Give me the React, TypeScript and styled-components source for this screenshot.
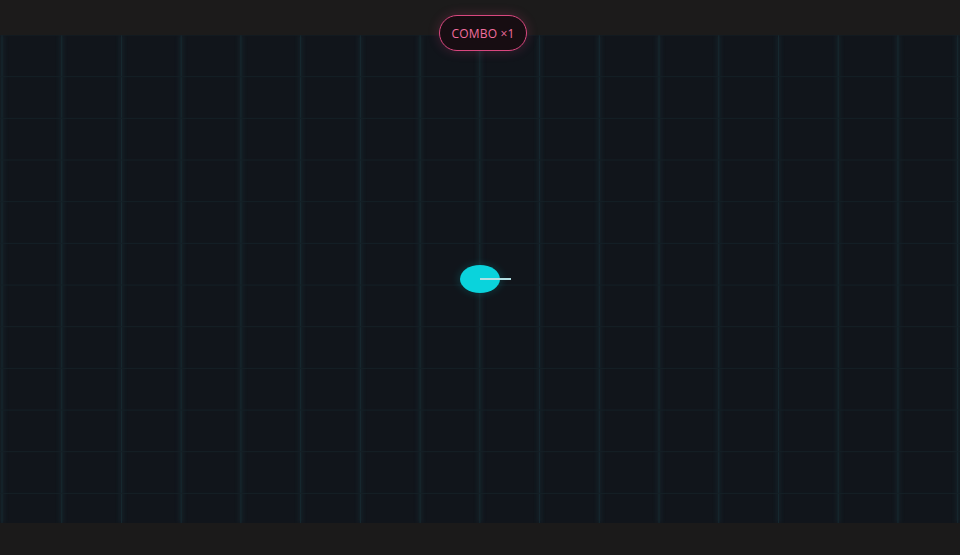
import React from "react";
import styled, { createGlobalStyle } from "styled-components";

const GlobalStyle = createGlobalStyle`
    html, body {
        margin: 0;
        padding: 0;
        background: #1b1b1b;
        font-family: "Open Sans", "Liberation Sans", sans-serif;
    }
`;

const FIELD_W = 960;
const FIELD_H = 488;
const COL = 59.73;
const ROW = 41.67;

const cols = Array.from({ length: 17 }, (_, i) => 2 + i * COL).filter((x) => x < FIELD_W);
const rows = Array.from({ length: 12 }, (_, i) => i * ROW).filter((y) => y < FIELD_H);

const Grid = () => (
    <svg width={FIELD_W} height={FIELD_H} viewBox={`0 0 ${FIELD_W} ${FIELD_H}`}>
        <defs>
            <filter id="glow" x="-10%" y="-10%" width="120%" height="120%">
                <feGaussianBlur stdDeviation="2" />
            </filter>
            <filter id="soft" x="-50%" y="-50%" width="200%" height="200%">
                <feGaussianBlur stdDeviation="3" />
            </filter>
        </defs>
        <g stroke="#1a3a44" strokeWidth="4" filter="url(#glow)" opacity="0.35">
            {cols.map((x) => (
                <line key={`gv${x}`} x1={x} y1={0} x2={x} y2={FIELD_H} />
            ))}
        </g>
        <g stroke="#172930" strokeWidth="1">
            {cols.map((x) => (
                <line key={`v${x}`} x1={x} y1={0} x2={x} y2={FIELD_H} />
            ))}
        </g>
        <g stroke="#152127" strokeWidth="1">
            {rows.map((y) => (
                <line key={`h${y}`} x1={0} y1={y} x2={FIELD_W} y2={y} />
            ))}
        </g>
        <ellipse cx={480} cy={244} rx={23} ry={16} fill="#00d2da" opacity="0.12" filter="url(#soft)" />
        <ellipse cx={480} cy={244} rx={20} ry={14} fill="#0ad3dc" />
        <line x1={480} y1={244} x2={511} y2={244} stroke="#b0dfe3" strokeWidth="2" />
    </svg>
);

export default function App() {
    return (
        <>
            <GlobalStyle />
            <Screen>
                <TopBar />
                <Field>
                    <Grid />
                </Field>
                <BottomBar />
                <Combo>COMBO ×1</Combo>
            </Screen>
        </>
    );
}

const Screen = styled.div`
    position: relative;
    display: flex;
    flex-direction: column;
    width: 960px;
    height: 555px;
    overflow: hidden;
    background: #1b1b1b;
`;

const TopBar = styled.div`
    height: 35px;
    flex: none;
    background: #1c1b1b;
`;

const Field = styled.div`
    height: 488px;
    flex: none;
    background: #11151b;
    svg {
        display: block;
    }
`;

const BottomBar = styled.div`
    flex: 1;
    background: #1b1a1a;
`;

const Combo = styled.div`
    position: absolute;
    top: 15px;
    left: 439px;
    width: 88px;
    height: 36px;
    box-sizing: border-box;
    display: flex;
    align-items: center;
    justify-content: center;
    border: 1px solid #d9477f;
    border-radius: 18px;
    background: #170d12;
    box-shadow: 0 0 12px rgba(230, 70, 130, 0.22);
    color: #f26d9f;
    font-size: 12px;
    letter-spacing: 0.2px;
`;
